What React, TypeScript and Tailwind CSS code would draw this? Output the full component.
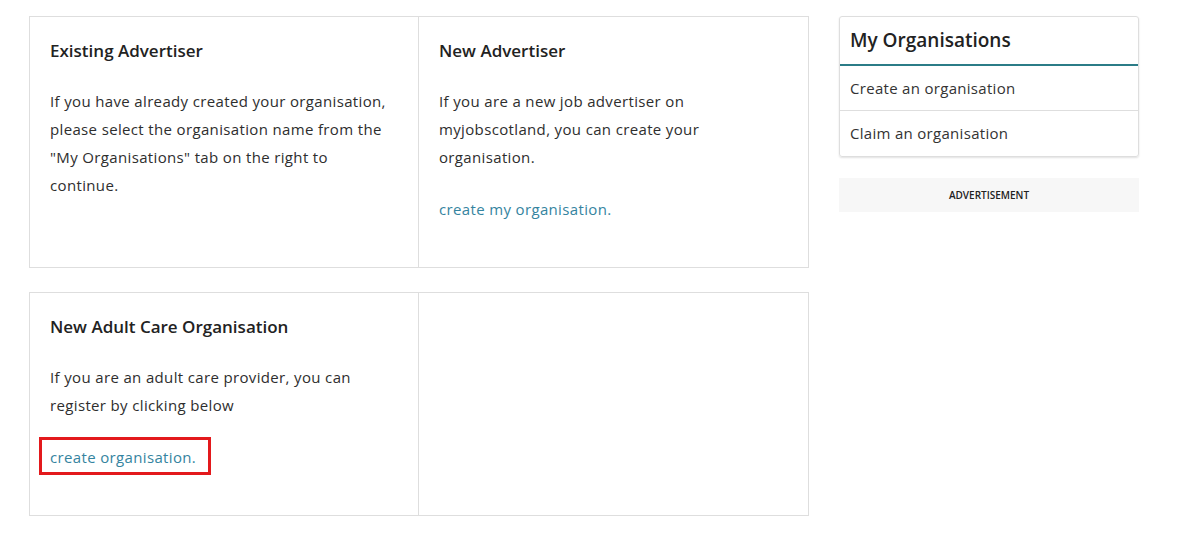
import React from "react";

const font = { fontFamily: "'Open Sans', Lato, sans-serif" };

export default function App() {
  return (
    <div className="w-[1177px] h-[551px] bg-white text-[#2e2e2e]" style={font}>
      <div className="flex gap-[30px] pl-[29px] pt-[16px]">
        <div className="w-[780px] flex flex-col gap-[24px]">
          <div className="grid grid-cols-2 border border-[#dedede] h-[252px]">
            <div className="border-r border-[#dedede] px-[20px] pt-[22px]">
              <h2 className="text-[17px] leading-[24px] font-semibold text-[#222]">Existing Advertiser</h2>
              <p className="mt-[24px] text-[15px] leading-[28px] tracking-[0.35px]">
                If you have already created your organisation, please select the organisation name from the "My Organisations" tab on the right to continue.
              </p>
            </div>
            <div className="px-[20px] pt-[22px]">
              <h2 className="text-[17px] leading-[24px] font-semibold text-[#222]">New Advertiser</h2>
              <p className="mt-[24px] text-[15px] leading-[28px] tracking-[0.35px]">
                If you are a new job advertiser on myjobscotland, you can create your organisation.
              </p>
              <p className="mt-[24px] text-[15px] leading-[28px] tracking-[0.35px]">
                <a className="text-[#3584a0]">create my organisation.</a>
              </p>
            </div>
          </div>
          <div className="grid grid-cols-2 border border-[#dedede] h-[224px]">
            <div className="border-r border-[#dedede] px-[20px] pt-[22px]">
              <h2 className="text-[17px] leading-[24px] font-semibold text-[#222]">New Adult Care Organisation</h2>
              <p className="mt-[24px] text-[15px] leading-[28px] tracking-[0.35px]">
                If you are an adult care provider, you can register by clicking below
              </p>
              <p className="mt-[24px] text-[15px] leading-[28px] tracking-[0.35px] relative">
                <a className="text-[#3584a0]">create organisation.</a>
                <span className="absolute left-[-11px] top-[-6px] w-[172px] h-[38px] border-[3px] border-[#e3191c]"></span>
              </p>
            </div>
            <div></div>
          </div>
        </div>
        <div className="w-[300px] flex flex-col gap-[21px]">
          <div className="border border-[#dedede] rounded-[3px] shadow-[0_1px_2px_rgba(0,0,0,0.12)]">
            <div className="h-[49px] px-[10px] flex items-center border-b-2 border-[#2b7c87]">
              <h3 className="text-[19px] font-semibold text-[#222]">My Organisations</h3>
            </div>
            <div className="h-[45px] px-[10px] flex items-center border-b border-[#dedede] text-[15px] font-medium tracking-[0.3px] text-[#333]">
              Create an organisation
            </div>
            <div className="h-[45px] px-[10px] flex items-center text-[15px] font-medium tracking-[0.3px] text-[#333]">
              Claim an organisation
            </div>
          </div>
          <div className="h-[34px] bg-[#f7f7f7] flex items-center justify-center text-[10px] font-semibold text-[#222]">
            ADVERTISEMENT
          </div>
        </div>
      </div>
    </div>
  );
}
